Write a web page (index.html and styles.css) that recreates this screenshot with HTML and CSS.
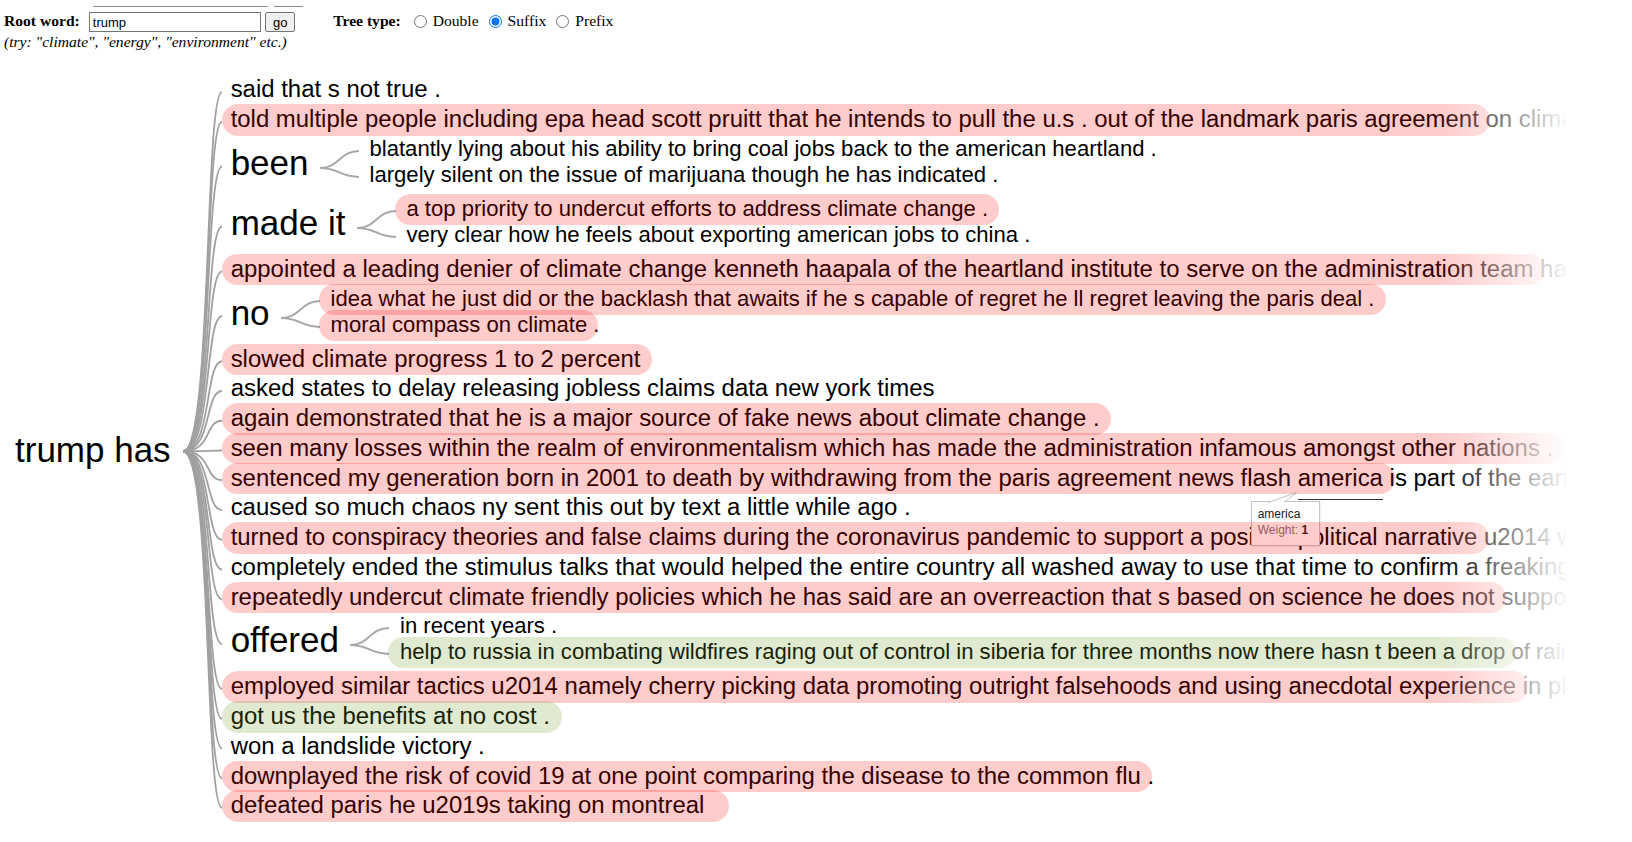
FILE: index.html
```html
<!DOCTYPE html>
<html>
<head>
<meta charset="utf-8">
<title>Word tree</title>
<link rel="stylesheet" href="styles.css">
</head>
<body>
<div class="page">
  <div class="ghost"><span class="g1"></span><span class="g2"></span></div>
  <div class="form">
    <span class="lbl">Root word:</span>
    <input class="word" type="text" value="trump">
    <button class="go">go</button>
    <span class="lbl tt">Tree type:</span>
    <label class="opt first"><input type="radio" name="t"><span>Double</span></label>
    <label class="opt"><input type="radio" name="t" checked><span>Suffix</span></label>
    <label class="opt"><input type="radio" name="t"><span>Prefix</span></label>
  </div>
  <div class="hint">(try: "climate", "energy", "environment" etc.)</div>

  <div class="tree">
    <div class="root">trump has</div>
    <svg class="links" width="39" height="745.75" viewBox="0 0 39 745.75">
      <g fill="none" stroke="#a0a0a0" stroke-width="1.8">
        <path d="M0 377.25C29.25 377.25 21.45 18 39 18"/>
        <path d="M0 377.25C29.25 377.25 21.45 47.75 39 47.75"/>
        <path d="M0 377.25C29.25 377.25 21.45 92.5 39 92.5"/>
        <path d="M0 377.25C29.25 377.25 21.45 152.5 39 152.5"/>
        <path d="M0 377.25C29.25 377.25 21.45 197.5 39 197.5"/>
        <path d="M0 377.25C29.25 377.25 21.45 242.25 39 242.25"/>
        <path d="M0 377.25C29.25 377.25 21.45 287.25 39 287.25"/>
        <path d="M0 377.25C29.25 377.25 21.45 317 39 317"/>
        <path d="M0 377.25C29.25 377.25 21.45 346.75 39 346.75"/>
        <path d="M0 377.25C29.25 377.25 21.45 376.5 39 376.5"/>
        <path d="M0 377.25C29.25 377.25 21.45 406.25 39 406.25"/>
        <path d="M0 377.25C29.25 377.25 21.45 436 39 436"/>
        <path d="M0 377.25C29.25 377.25 21.45 465.75 39 465.75"/>
        <path d="M0 377.25C29.25 377.25 21.45 495.5 39 495.5"/>
        <path d="M0 377.25C29.25 377.25 21.45 525.25 39 525.25"/>
        <path d="M0 377.25C29.25 377.25 21.45 570 39 570"/>
        <path d="M0 377.25C29.25 377.25 21.45 615 39 615"/>
        <path d="M0 377.25C29.25 377.25 21.45 644.75 39 644.75"/>
        <path d="M0 377.25C29.25 377.25 21.45 674.5 39 674.5"/>
        <path d="M0 377.25C29.25 377.25 21.45 704.25 39 704.25"/>
        <path d="M0 377.25C29.25 377.25 21.45 734 39 734"/>
      </g>
    </svg>
    <div class="kids">
      <div class="leaf">said that s not true .</div>
      <div class="leaf"><span class="hl">told multiple people including epa head scott pruitt that he intends to pull the u.s . out of the landmark paris agreement </span>on climate change and</div>

      <div class="sub">
        <div class="node">been</div>
        <svg class="slink" width="39" height="60" viewBox="0 0 39 60"><g fill="none" stroke="#a8a8a8" stroke-width="2"><path d="M0 34C19.5 34 19.5 16.9 39 16.9"/><path d="M0 34C19.5 34 19.5 42.9 39 42.9"/></g></svg>
        <div class="skids">
          <div class="sleaf">blatantly lying about his ability to bring coal jobs back to the american heartland .</div>
          <div class="sleaf">largely silent on the issue of marijuana though he has indicated .</div>
        </div>
      </div>

      <div class="sub">
        <div class="node">made it</div>
        <svg class="slink" width="39" height="60" viewBox="0 0 39 60"><g fill="none" stroke="#a8a8a8" stroke-width="2"><path d="M0 34C19.5 34 19.5 16.9 39 16.9"/><path d="M0 34C19.5 34 19.5 42.9 39 42.9"/></g></svg>
        <div class="skids">
          <div class="sleaf"><span class="hl">a top priority to undercut efforts to address climate change .&nbsp;</span></div>
          <div class="sleaf">very clear how he feels about exporting american jobs to china .</div>
        </div>
      </div>

      <div class="leaf"><span class="hl">appointed a leading denier of climate change kenneth haapala of the heartland institute to serve on the administration team </span>has been</div>

      <div class="sub">
        <div class="node">no</div>
        <svg class="slink" width="39" height="60" viewBox="0 0 39 60"><g fill="none" stroke="#a8a8a8" stroke-width="2"><path d="M0 34C19.5 34 19.5 16.9 39 16.9"/><path d="M0 34C19.5 34 19.5 42.9 39 42.9"/></g></svg>
        <div class="skids">
          <div class="sleaf"><span class="hl">idea what he just did or the backlash that awaits if he s capable of regret he ll regret leaving the paris deal .&nbsp;</span></div>
          <div class="sleaf"><span class="hl">moral compass on climate </span>.</div>
        </div>
      </div>

      <div class="leaf"><span class="hl">slowed climate progress 1 to 2 percent&nbsp;</span></div>
      <div class="leaf">asked states to delay releasing jobless claims data new york times</div>
      <div class="leaf"><span class="hl">again demonstrated that he is a major source of fake news about climate change .&nbsp;</span></div>
      <div class="leaf"><span class="hl">seen many losses within the realm of environmentalism which has made the administration infamous amongst other nations .&nbsp;</span></div>
      <div class="leaf"><span class="hl">sentenced my generation born in 2001 to death by withdrawing from the paris agreement news flash <span class="ul">america</span> </span>is part of the earth</div>
      <div class="leaf">caused so much chaos ny sent this out by text a little while ago .</div>
      <div class="leaf"><span class="hl">turned to conspiracy theories and false claims during the coronavirus pandemic to support a positive political narrative </span>u2014 which</div>
      <div class="leaf">completely ended the stimulus talks that would helped the entire country all washed away to use that time to confirm a freaking judge</div>
      <div class="leaf"><span class="hl">repeatedly undercut climate friendly policies which he has said are an overreaction that s based on science he does not </span>support</div>

      <div class="sub">
        <div class="node">offered</div>
        <svg class="slink" width="39" height="60" viewBox="0 0 39 60"><g fill="none" stroke="#a8a8a8" stroke-width="2"><path d="M0 34C19.5 34 19.5 16.9 39 16.9"/><path d="M0 34C19.5 34 19.5 42.9 39 42.9"/></g></svg>
        <div class="skids">
          <div class="sleaf">in recent years .</div>
          <div class="sleaf"><span class="hl g">help to russia in combating wildfires raging out of control in siberia for three months now there hasn t been a drop </span>of rain</div>
        </div>
      </div>

      <div class="leaf"><span class="hl">employed similar tactics u2014 namely cherry picking data promoting outright falsehoods and using anecdotal experience </span>in place</div>
      <div class="leaf"><span class="hl g">got us the benefits at no cost .&nbsp;</span></div>
      <div class="leaf">won a landslide victory .</div>
      <div class="leaf"><span class="hl">downplayed the risk of covid 19 at one point comparing the disease to the common flu </span>.</div>
      <div class="leaf"><span class="hl">defeated paris he u2019s taking on montreal&nbsp;&nbsp;&nbsp;</span></div>
    </div>

    <div class="tip">
      <svg class="tail" width="60" height="12" viewBox="0 0 60 12"><path d="M17 11.5L45.5 1.5L33 11.5" fill="#fff" stroke="#c4c4c4" stroke-width="1"/></svg>
      <div class="tw">america</div>
      <div class="tv">Weight: <b>1</b></div>
    </div>
    <div class="fade"></div>
  </div>
</div>
</body>
</html>
```

FILE: styles.css
```css
html, body {
  margin: 0;
  background: #fff;
}
body {
  font-family: "Liberation Serif", "Times New Roman", serif;
  color: #000;
}
.page {
  padding-left: 4px;
}

/* remnants of the row above, scrolled out */
.ghost {
  display: flex;
  height: 7px;
  padding-left: 89px;
}
.ghost span {
  display: block;
  height: 6px;
  border-bottom: 1px solid #8a8a8a;
}
.g1 { width: 175px; }
.g2 { width: 29px; margin-left: 6px; }

/* form */
.form {
  display: flex;
  align-items: center;
  height: 20px;
  margin-top: 5px;
  font-size: 15.6px;
}
.lbl {
  font-weight: bold;
  margin-bottom: 2px;
}
.word {
  box-sizing: border-box;
  width: 172px;
  height: 20px;
  margin: 0 0 0 9px;
  border: 1px solid #767676;
  border-radius: 0;
  padding: 0 3px;
  font: 13px "Liberation Sans", Arial, sans-serif;
  color: #000;
  background: #fff;
}
.go {
  box-sizing: border-box;
  width: 30px;
  height: 20px;
  margin: 0 0 0 4.5px;
  padding: 0;
  border: 1px solid #767676;
  border-radius: 2px;
  background: #efefef;
  font: 13px "Liberation Sans", Arial, sans-serif;
  color: #000;
}
.tt {
  margin-left: 38px;
}
.opt {
  display: flex;
  align-items: center;
  margin-bottom: 2px;
}
.opt input {
  width: 13px;
  height: 13px;
  margin: 0 6px 0 10px;
}
.opt.first input {
  margin-left: 13px;
}
.hint {
  font-style: italic;
  font-size: 15.6px;
  line-height: 15px;
  margin-top: 2px;
}

/* word tree */
.tree {
  position: relative;
  display: flex;
  box-sizing: border-box;
  width: 1562px;
  margin-top: 25.25px;
  padding: 0 0 4px 11px;
  overflow: hidden;
  font-family: "Liberation Sans", Arial, sans-serif;
  color: #000;
}
.root {
  flex: none;
  align-self: center;
  font-size: 35px;
  line-height: 35px;
  padding-top: 4.6px;
  margin-right: 12px;
  white-space: nowrap;
}
.links, .slink {
  flex: none;
  display: block;
  overflow: visible;
}
.kids {
  display: flex;
  flex-direction: column;
  flex: none;
}
.leaf {
  height: 29.75px;
  line-height: 29.75px;
  font-size: 23.95px;
  padding-left: 9px;
  white-space: nowrap;
}
.sub {
  display: flex;
  height: 60px;
  flex: none;
}
.node {
  flex: none;
  font-size: 35px;
  line-height: 58px;
  padding-left: 9px;
  margin-right: 11.5px;
  white-space: nowrap;
}
.skids {
  padding-top: 2px;
}
.sleaf {
  height: 26px;
  line-height: 26px;
  font-size: 22.1px;
  padding-left: 10.5px;
  white-space: nowrap;
}

/* highlighted phrases: translucent pill laid over the words */
.hl {
  position: relative;
}
.hl::after {
  content: "";
  position: absolute;
  left: -8.5px;
  right: -5px;
  top: -1px;
  bottom: -3.5px;
  border-radius: 16px;
  background: rgba(255, 0, 0, 0.2);
  z-index: 2;
  pointer-events: none;
}
.sleaf .hl::after {
  left: -11.5px;
  top: -2px;
  bottom: -4px;
}
.hl.g::after {
  background: rgba(110, 155, 35, 0.21);
}
.ul {
  padding-bottom: 8px;
  border-bottom: 1px solid #333;
}

/* tooltip */
.tip {
  position: absolute;
  left: 1246.7px;
  top: 426.5px;
  width: 69px;
  height: 45px;
  box-sizing: border-box;
  padding: 4.2px 0 0 6px;
  border: 1px solid #c4c4c4;
  background: #fff;
  box-shadow: 1px 1px 2px rgba(0, 0, 0, 0.08);
  font: 12px/16px "Liberation Sans", Arial, sans-serif;
  z-index: 1;
}
.tail {
  position: absolute;
  left: -1px;
  top: -11px;
  display: block;
  overflow: visible;
}
.tw { color: #222; }
.tv { color: #777; }
.tv b { color: #222; }

/* right edge fade */
.fade {
  position: absolute;
  top: 0;
  right: 0;
  bottom: 0;
  width: 126px;
  background: linear-gradient(to right, rgba(255, 255, 255, 0), rgba(255, 255, 255, 0.97));
  z-index: 3;
  pointer-events: none;
}
```
